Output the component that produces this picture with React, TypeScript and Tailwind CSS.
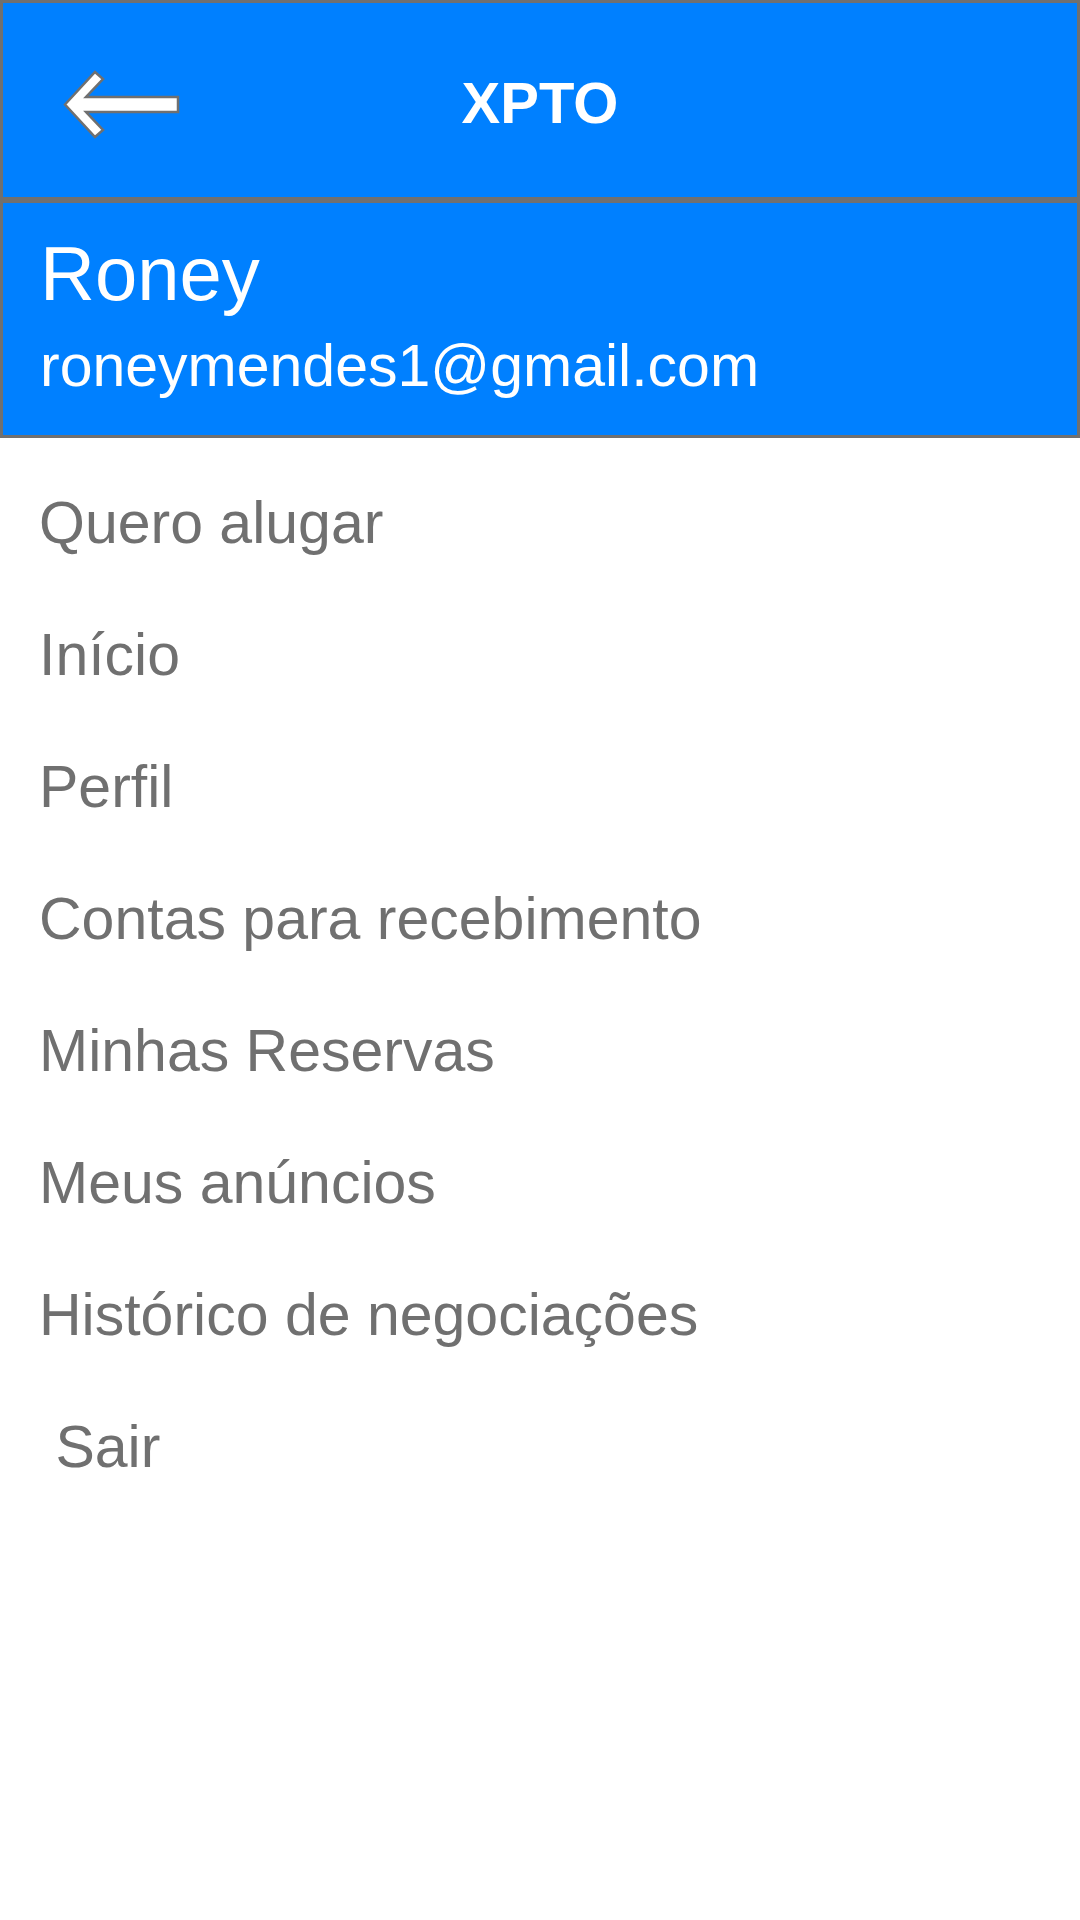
const menuItems = [
    "Quero alugar",
    "Início",
    "Perfil",
    "Contas para recebimento",
    "Minhas Reservas",
    "Meus anúncios",
    "Histórico de negociações",
    "\u00a0Sair",
];

const BackArrow = () => (
    <svg width="124" height="74" viewBox="60 68 124 74" className="block">
        <polygon
            points="65,104.5 95,72 103,79 86,97 178,97 178,112 86,112 103,130 95,137"
            fill="#ffffff"
            stroke="#707070"
            strokeWidth="2.5"
            strokeLinejoin="miter"
        />
    </svg>
);

const App = () => {
    return (
        <div className="min-h-[1920px] w-[1080px] bg-white font-['Liberation_Sans',Arial,sans-serif]">
            <header className="h-[200px] border-[3px] border-[#707070] bg-[#0080ff] grid grid-cols-[1fr_auto_1fr] items-center">
                <div className="ml-[57px] mt-[10px]">
                    <BackArrow />
                </div>
                <h1 className="mt-[6px] text-[58px] leading-none font-bold text-white">XPTO</h1>
                <div />
            </header>

            <section className="h-[238px] border-[3px] border-[#707070] bg-[#0080ff] pl-[37px] pt-[33px] text-white">
                <div className="text-[76px] leading-[76px]">Roney</div>
                <div className="mt-[25px] text-[59px] leading-[59px]">roneymendes1@gmail.com</div>
            </section>

            <nav className="pt-[19px] pl-[39px]">
                <ul>
                    {menuItems.map((item) => (
                        <li
                            key={item}
                            className="text-[59px] leading-[132px] text-[#707070] whitespace-pre cursor-pointer"
                        >
                            {item}
                        </li>
                    ))}
                </ul>
            </nav>
        </div>
    );
};

export default App;
